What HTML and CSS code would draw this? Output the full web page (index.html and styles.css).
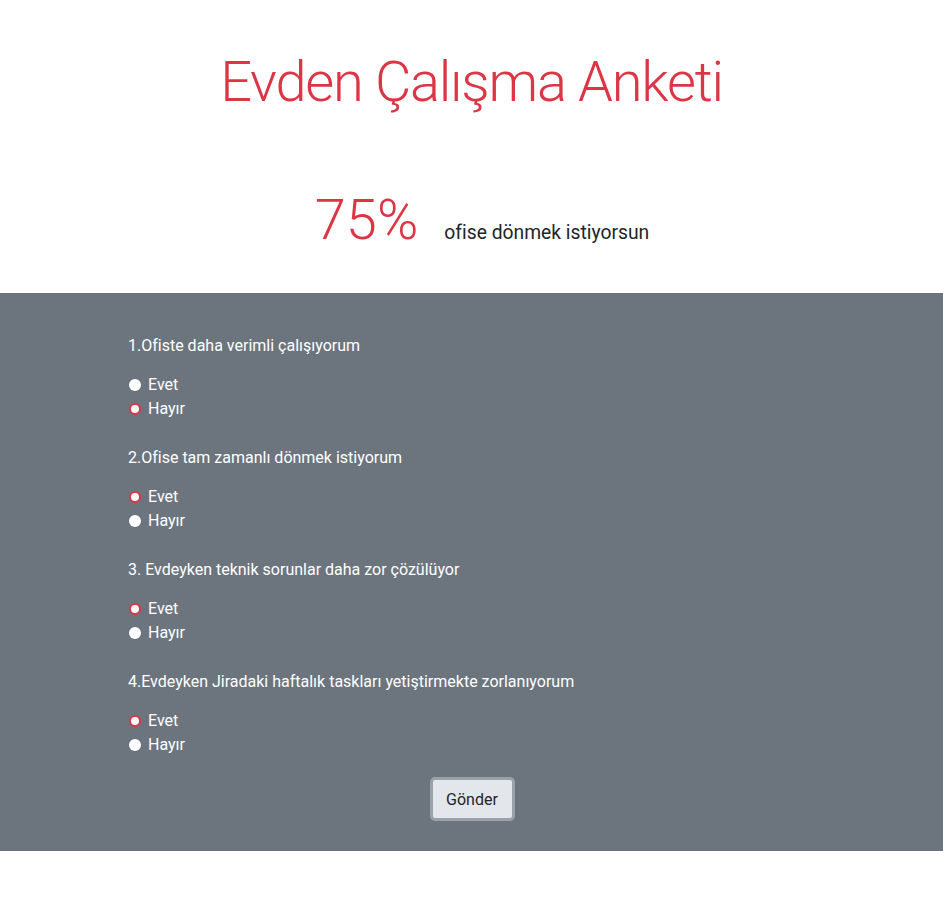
FILE: index.html
```html
<!DOCTYPE html>
<html lang="tr">
<head>
<meta charset="utf-8">
<title>Evden Çalışma Anketi</title>
<link rel="stylesheet" href="styles.css">
</head>
<body>
<header class="hero">
  <h1 class="title">Evden Çalışma Anketi</h1>
  <div class="result">
    <span class="percent">75%</span>
    <span class="lead">ofise dönmek istiyorsun</span>
  </div>
</header>
<section class="survey">
  <form class="form">
    <div class="question">
      <p class="q-text">1.Ofiste daha verimli çalışıyorum</p>
      <label class="option"><input type="radio" name="q1"><span>Evet</span></label>
      <label class="option"><input type="radio" name="q1" checked><span>Hayır</span></label>
    </div>
    <div class="question">
      <p class="q-text">2.Ofise tam zamanlı dönmek istiyorum</p>
      <label class="option"><input type="radio" name="q2" checked><span>Evet</span></label>
      <label class="option"><input type="radio" name="q2"><span>Hayır</span></label>
    </div>
    <div class="question">
      <p class="q-text">3. Evdeyken teknik sorunlar daha zor çözülüyor</p>
      <label class="option"><input type="radio" name="q3" checked><span>Evet</span></label>
      <label class="option"><input type="radio" name="q3"><span>Hayır</span></label>
    </div>
    <div class="question">
      <p class="q-text">4.Evdeyken Jiradaki haftalık taskları yetiştirmekte zorlanıyorum</p>
      <label class="option"><input type="radio" name="q4" checked><span>Evet</span></label>
      <label class="option"><input type="radio" name="q4"><span>Hayır</span></label>
    </div>
    <div class="actions">
      <button type="button" class="btn">Gönder</button>
    </div>
  </form>
</section>
</body>
</html>
```
FILE: styles.css
```css
* { box-sizing: border-box; }
html, body { margin: 0; padding: 0; }
body {
  font-family: Roboto, "Noto Sans", sans-serif;
  color: #212529;
  background: #fff;
  font-size: 16px;
  line-height: 1.5;
}
.hero {
  text-align: center;
  padding-top: 49px;
  height: 293px;
}
.title {
  margin: 0;
  font-size: 56px;
  font-weight: 300;
  letter-spacing: -1.25px;
  line-height: 1.2;
  color: #dc3545;
}
.result {
  margin-top: 71px;
  padding-left: 21px;
  display: flex;
  justify-content: center;
  align-items: baseline;
  gap: 26px;
}
.percent {
  font-size: 56px;
  font-weight: 300;
  line-height: 1.2;
  color: #dc3545;
}
.lead {
  font-size: 19.3px;
  font-weight: 400;
}
.survey {
  background: #6c757d;
  color: #fff;
  padding: 41px 0 30px;
}
.form {
  width: 687px;
  margin: 0 auto 0 128px;
}
.question { margin-bottom: 25px; }
.q-text {
  margin: 0 0 15px;
  font-size: 16px;
  line-height: 24px;
}
.option {
  display: flex;
  align-items: center;
  height: 24px;
  font-size: 16px;
}
.option input {
  appearance: none;
  -webkit-appearance: none;
  margin: 0 7px 0 1px;
  width: 12px;
  height: 12px;
  border-radius: 50%;
  background: #fff;
  border: none;
}
.option input:checked {
  border: 2.5px solid #dc3545;
  background: #fff;
}
.actions {
  display: flex;
  justify-content: center;
  margin-top: -5px;
}
.btn {
  font-family: Roboto, "Noto Sans", sans-serif;
  font-size: 16px;
  color: #212529;
  background: #e3e6ea;
  border: 3px solid #9aa1a8;
  border-radius: 5px;
  width: 85px;
  height: 44px;
  padding: 0;
  margin-left: 1px;
}
```
